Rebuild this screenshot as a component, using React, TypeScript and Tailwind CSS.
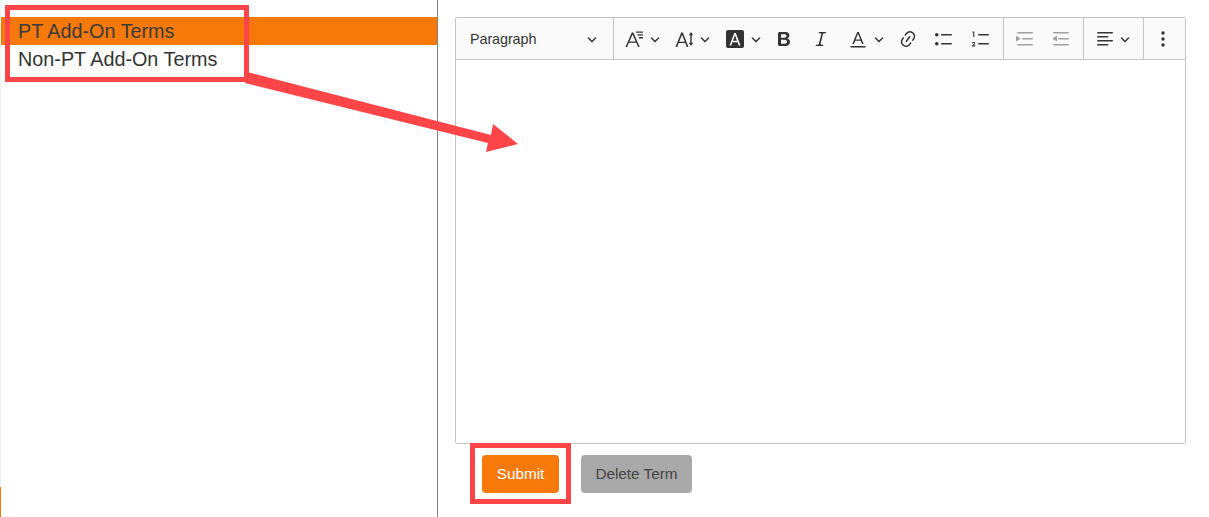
const Ico = ({ d, w = 20, cls = "text-[#333]" }: { d: string; w?: number; cls?: string }) => (
  <svg viewBox={`0 0 ${w} ${w}`} width={w} height={w} className={`shrink-0 ${cls}`} fill="currentColor"><path d={d} /></svg>
);
const Chev = () => (
  <svg viewBox="0 0 10 10" width="10" height="10" className="shrink-0 text-[#333]" fill="currentColor">
    <path d="M.941 4.523a.75.75 0 1 1 1.06-1.06l3.006 3.005 3.005-3.005a.75.75 0 1 1 1.06 1.06l-3.549 3.55a.75.75 0 0 1-1.168-.136L.941 4.523z" />
  </svg>
);
const S = ({ children }: { children: React.ReactNode }) => (
  <svg viewBox="0 0 20 20" width="20" height="20" className="shrink-0 text-[#333]" fill="currentColor">{children}</svg>
);
const bold = "M10.187 17H5.773c-.637 0-1.092-.138-1.364-.415-.273-.277-.409-.718-.409-1.323V4.738c0-.617.14-1.062.419-1.332.279-.27.73-.406 1.354-.406h4.68c.69 0 1.288.041 1.793.124.506.083.96.242 1.36.478.341.197.644.447.906.75a3.262 3.262 0 0 1 .808 2.162c0 1.401-.722 2.426-2.167 3.075C15.05 10.175 16 11.315 16 13.01a3.756 3.756 0 0 1-2.296 3.504 6.1 6.1 0 0 1-1.517.377c-.571.073-1.238.11-2 .11zm-.217-6.217H7v4.087h3.069c1.977 0 2.965-.69 2.965-2.072 0-.707-.256-1.22-.768-1.537-.512-.319-1.277-.478-2.296-.478zM7 5.13v3.619h2.606c.729 0 1.292-.067 1.69-.2a1.6 1.6 0 0 0 .91-.765c.165-.267.247-.566.247-.897 0-.707-.26-1.176-.778-1.409-.519-.232-1.31-.348-2.375-.348H7z";
const italic = "m9.586 14.633.021.004c-.036.335.095.655.393.962.082.083.173.15.274.201h1.474a.6.6 0 1 1 0 1.2H5.304a.6.6 0 0 1 0-1.2h1.15c.474-.07.809-.182 1.005-.334.157-.122.291-.32.404-.597l2.416-9.55a1.053 1.053 0 0 0-.281-.823 1.12 1.12 0 0 0-.442-.296H8.15a.6.6 0 0 1 0-1.2h6.443a.6.6 0 1 1 0 1.2h-1.195c-.376.056-.65.155-.823.296-.215.175-.423.439-.623.79l-2.366 9.347z";
const link = "m11.077 15 .991-1.416a.75.75 0 1 1 1.229.86l-1.148 1.64a.748.748 0 0 1-.217.206 5.251 5.251 0 0 1-8.503-5.955.741.741 0 0 1 .12-.274l1.147-1.639a.75.75 0 1 1 1.228.86L4.933 10.7l.006.003a3.75 3.75 0 0 0 6.132 4.294l.006.004zm5.494-5.335a.748.748 0 0 1-.12.274l-1.147 1.639a.75.75 0 1 1-1.228-.86l.86-1.23a3.75 3.75 0 0 0-6.144-4.301l-.86 1.229a.75.75 0 0 1-1.229-.86l1.148-1.64a.748.748 0 0 1 .217-.206 5.251 5.251 0 0 1 8.503 5.955zm-4.563-2.532a.75.75 0 0 1 .184 1.045l-3.155 4.505a.75.75 0 1 1-1.229-.86l3.155-4.506a.75.75 0 0 1 1.045-.184z";
const bullet = "M7 5.75c0 .414.336.75.75.75h9.5a.75.75 0 1 0 0-1.5h-9.5a.75.75 0 0 0-.75.75zm-6 0C1 4.784 1.777 4 2.75 4c.966 0 1.75.777 1.75 1.75 0 .966-.777 1.75-1.75 1.75C1.784 7.5 1 6.723 1 5.75zm6 9c0 .414.336.75.75.75h9.5a.75.75 0 1 0 0-1.5h-9.5a.75.75 0 0 0-.75.75zm-6 0c0-.966.777-1.75 1.75-1.75.966 0 1.75.777 1.75 1.75 0 .966-.777 1.75-1.75 1.75-.966 0-1.75-.777-1.75-1.75z";
const lines = "M2 3.75c0 .414.336.75.75.75h14.5a.75.75 0 1 0 0-1.5H2.75a.75.75 0 0 0-.75.75zm5 6c0 .414.336.75.75.75h9.5a.75.75 0 1 0 0-1.5h-9.5a.75.75 0 0 0-.75.75zM2.75 16.5h14.5a.75.75 0 1 0 0-1.5H2.75a.75.75 0 1 0 0 1.5z";
const indent = lines + "M1.632 6.95 5.02 9.358a.4.4 0 0 1-.013.661l-3.39 2.207A.4.4 0 0 1 1 11.892V7.275a.4.4 0 0 1 .632-.326z";
const outdent = lines + "M5.368 6.95 1.98 9.358a.4.4 0 0 0 .013.661l3.39 2.207A.4.4 0 0 0 6 11.892V7.275a.4.4 0 0 0-.632-.326z";
const align = "M2 3.75c0 .414.336.75.75.75h14.5a.75.75 0 1 0 0-1.5H2.75a.75.75 0 0 0-.75.75zm0 8c0 .414.336.75.75.75h14.5a.75.75 0 1 0 0-1.5H2.75a.75.75 0 0 0-.75.75zm0 4c0 .414.336.75.75.75h9.929a.75.75 0 1 0 0-1.5H2.75a.75.75 0 0 0-.75.75zm0-8c0 .414.336.75.75.75h9.929a.75.75 0 1 0 0-1.5H2.75a.75.75 0 0 0-.75.75z";

const Cell = ({ w, children }: { w: string; children: React.ReactNode }) => (
  <div className={`flex items-center justify-center ${w}`}>{children}</div>
);
const Sep = () => <div className="w-px self-stretch bg-[#c4c4c4]" />;

export default function App() {
  return (
    <div className="relative flex h-[517px] w-[1209px] overflow-hidden bg-white text-[#333]" style={{ fontFamily: '"Liberation Sans", Arial, sans-serif' }}>
      <div className="flex w-px flex-col">
        <div className="flex-1 bg-[#f0f0f0]" />
        <div className="h-[30px] bg-[#f7790a]" />
      </div>
      <aside className="w-[437px] border-r border-[#808080] pt-[17px] text-[19.8px] leading-[28px]">
        <div className="bg-[#f7790a] pl-[17px] text-[#3a3a3a]">PT Add-On Terms</div>
        <div className="pl-[17px]">Non-PT Add-On Terms</div>
      </aside>
      <main className="flex-1 pl-[17px] pt-[17px]">
        <div className="flex h-[427px] w-[731px] flex-col rounded-[2px] border border-[#c4c4c4]">
          <div className="flex h-[42px] items-center border-b border-[#c4c4c4] bg-[#fafafa]">
            <div className="flex w-[157px] items-center justify-between self-stretch pl-[14px] pr-[16px] text-[14.4px] text-[#333] tracking-[-0.1px]">
              <span className="pt-[2px]">Paragraph</span>
              <Chev />
            </div>
            <Sep />
            <div className="flex w-[389px] items-center self-stretch pl-[6px]">
              <Cell w="w-[44px] gap-[6px]">
                <S>
                  <path d="M1.5 18 7.800 3.500h1.600L15.700 18h-1.700l-1.700-4.200H4.900L3.200 18H1.500zm4-5.500h6.200L8.600 5.600l-3.100 6.900z" />
                  <path d="M12 2.500h7v1.300h-7zM13.500 5.300h5.500v1.300h-5.500zM15 8.100h4v1.300h-4z" />
                </S>
                <Chev />
              </Cell>
              <Cell w="w-[56px] gap-[5px]">
                <S>
                  <path d="M.5 18 6.200 3.500h1.600L13.500 18h-1.700l-1.500-4H3.700l-1.500 4H.500zm3.700-5.300h5.600L7 5.700l-2.800 7z" />
                  <path d="M16 3l2.200 3.200h-1.500v7.600h1.500L16 17l-2.200-3.200h1.500V6.200h-1.500z" />
                </S>
                <Chev />
              </Cell>
              <Cell w="w-[45px] gap-[6px]">
                <S>
                  <path fillRule="evenodd" d="M3 1h14a2 2 0 0 1 2 2v14a2 2 0 0 1-2 2H3a2 2 0 0 1-2-2V3a2 2 0 0 1 2-2zm6.200 3L4.500 16.500h1.700l1.200-3.300h5.200l1.200 3.300h1.700L10.800 4H9.200zM8 11.800l2-5.600 2 5.600H8z" />
                </S>
                <Chev />
              </Cell>
              <Cell w="w-[38px]"><Ico d={bold} /></Cell>
              <Cell w="w-[36px]"><Ico d={italic} /></Cell>
              <Cell w="w-[54px] gap-[6px]">
                <S>
                  <path d="M4.300 15 9.200 3h1.600L15.700 15H14l-1.200-3.200H7.200L6 15H4.300zm3.400-4.500h4.600L10 4.800l-2.300 5.700z" />
                  <path d="M2.500 17h15v1.500h-15z" />
                </S>
                <Chev />
              </Cell>
              <Cell w="w-[30px]"><Ico d={link} /></Cell>
              <Cell w="w-[42px]"><Ico d={bullet} /></Cell>
              <Cell w="w-[32px]">
                <S>
                  <path d="M7 5.750c0 .414.336.75.75.75h9.500a.75.75 0 1 0 0-1.500h-9.500a.75.75 0 0 0-.75.750zm0 9c0 .414.336.75.75.75h9.500a.75.75 0 1 0 0-1.500h-9.500a.75.750 0 0 0-.75.750z" />
                  <path d="M3.300 2.500V8H2.200V3.600H1.200v-.8l1-.3zM1 17.500v-.9l1.700-1.600c.3-.3.400-.5.400-.7 0-.300-.2-.400-.5-.400-.3 0-.5.200-.6.500L1 14.100c.1-.8.700-1.200 1.600-1.200.9 0 1.600.4 1.600 1.200 0 .5-.3.900-.7 1.300l-1 .9h1.800v1.200H1z" />
                </S>
              </Cell>
            </div>
            <Sep />
            <div className="flex w-[79px] items-center self-stretch pl-[2px]">
              <Cell w="w-[37px]"><Ico d={indent} cls="text-[#a0a0a0]" /></Cell>
              <Cell w="w-[36px]"><Ico d={outdent} cls="text-[#a0a0a0]" /></Cell>
            </div>
            <Sep />
            <Cell w="w-[59px] gap-[5px] pr-[3px]"><Ico d={align} /><Chev /></Cell>
            <Sep />
            <Cell w="flex-1 pr-[3px]">
              <S>
                <circle cx="10" cy="4" r="1.700" />
                <circle cx="10" cy="10" r="1.700" />
                <circle cx="10" cy="16" r="1.700" />
              </S>
            </Cell>
          </div>
          <div className="flex-1 bg-white" />
        </div>
        <div className="ml-[27px] mt-[11px] flex gap-[22px] text-[15.3px]">
          <button className="h-[38px] w-[77px] rounded-[4px] bg-[#f7790a] text-white">Submit</button>
          <button className="h-[38px] w-[111px] rounded-[4px] bg-[#a9a9a9] text-[#444]">Delete Term</button>
        </div>
      </main>
      <div className="absolute left-[5px] top-[5px] h-[77px] w-[244px] border-[5px] border-[#ff4548]" />
      <div className="absolute left-[470px] top-[443px] h-[61px] w-[101px] border-[5px] border-[#ff4548]" />
      <svg className="absolute left-0 top-0" width="1209" height="517" fill="#ff4548">
        <polygon points="247,72 491,135 493,124 518,144 486,152 488,143 245,83" />
      </svg>
    </div>
  );
}
